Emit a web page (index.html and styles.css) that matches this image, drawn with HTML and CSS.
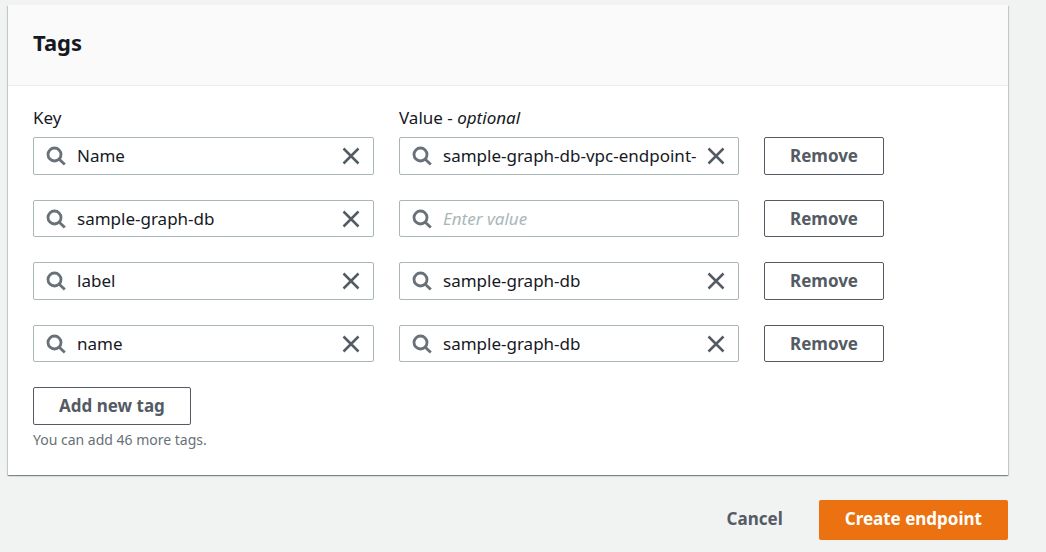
FILE: index.html
```html
<!DOCTYPE html>
<html lang="en">
<head>
<meta charset="utf-8">
<title>Create endpoint</title>
<link rel="stylesheet" href="styles.css">
</head>
<body>
<svg class="sprite" aria-hidden="true">
  <symbol id="search" viewBox="0 0 20 20"><circle cx="8.5" cy="8.5" r="6.5"/><path d="M13 13 18.8 18.6"/></symbol>
  <symbol id="close" viewBox="0 0 18 18"><path d="M1.5 1.5 16.5 16.5M16.5 1.5 1.5 16.5"/></symbol>
</svg>
<form class="page">
  <section class="card">
    <header class="card-header"><h2>Tags</h2></header>
    <div class="card-body">
      <div class="columns labels">
        <label for="key1">Key</label>
        <label for="value1">Value - <em>optional</em></label>
      </div>
      <div class="rows">
        <div class="columns">
          <div class="field"><svg class="search"><use href="#search"/></svg><input type="text" id="key1" value="Name"><button type="button" class="clear" aria-label="Clear key"><svg><use href="#close"/></svg></button></div>
          <div class="field"><svg class="search"><use href="#search"/></svg><input type="text" id="value1" value="sample-graph-db-vpc-endpoint-1"><button type="button" class="clear" aria-label="Clear value"><svg><use href="#close"/></svg></button></div>
          <button type="button" class="button">Remove</button>
        </div>
        <div class="columns">
          <div class="field"><svg class="search"><use href="#search"/></svg><input type="text" aria-label="Key" value="sample-graph-db"><button type="button" class="clear" aria-label="Clear key"><svg><use href="#close"/></svg></button></div>
          <div class="field"><svg class="search"><use href="#search"/></svg><input type="text" aria-label="Value" placeholder="Enter value"></div>
          <button type="button" class="button">Remove</button>
        </div>
        <div class="columns">
          <div class="field"><svg class="search"><use href="#search"/></svg><input type="text" aria-label="Key" value="label"><button type="button" class="clear" aria-label="Clear key"><svg><use href="#close"/></svg></button></div>
          <div class="field"><svg class="search"><use href="#search"/></svg><input type="text" aria-label="Value" value="sample-graph-db"><button type="button" class="clear" aria-label="Clear value"><svg><use href="#close"/></svg></button></div>
          <button type="button" class="button">Remove</button>
        </div>
        <div class="columns">
          <div class="field"><svg class="search"><use href="#search"/></svg><input type="text" aria-label="Key" value="name"><button type="button" class="clear" aria-label="Clear key"><svg><use href="#close"/></svg></button></div>
          <div class="field"><svg class="search"><use href="#search"/></svg><input type="text" aria-label="Value" value="sample-graph-db"><button type="button" class="clear" aria-label="Clear value"><svg><use href="#close"/></svg></button></div>
          <button type="button" class="button">Remove</button>
        </div>
      </div>
      <button type="button" class="button add">Add new tag</button>
      <p class="hint">You can add 46 more tags.</p>
    </div>
  </section>
  <footer class="actions">
    <button type="button" class="cancel">Cancel</button>
    <button type="submit" class="primary">Create endpoint</button>
  </footer>
</form>
</body>
</html>
```

FILE: styles.css
```css
* {
  box-sizing: border-box;
}

body {
  margin: 0;
  background: #f1f3f3;
  color: #16191f;
  font: 17px/24px "Noto Sans", "Open Sans", sans-serif;
}

input,
button {
  font: inherit;
}

button {
  cursor: pointer;
}

.sprite {
  display: none;
}

.page {
  padding: 5px 38px 12px 8px;
}

.card {
  background: #fff;
  box-shadow: 0 1px 1px #001c244d, 1px 1px 1px #001c2426, -1px 1px 1px #001c2426;
}

.card-header {
  padding: 23px 25px 29px;
  background: #fafafa;
  border-bottom: 1px solid #eaeded;
}

h2 {
  margin: 0;
  font-size: 22px;
  line-height: 28px;
}

.card-body {
  padding: 20px 25px 25px;
}

.columns {
  display: grid;
  grid-template-columns: 341fr 340fr 219fr;
  column-gap: 25px;
}

.labels {
  margin-bottom: 7px;
}

.rows {
  display: grid;
  grid-auto-rows: 38px 37px;
  row-gap: 25px;
}

.field {
  display: flex;
  align-items: center;
  min-width: 0;
  padding: 0 13px 0 12px;
  background: #fff;
  border: 1px solid #aab7b8;
  border-radius: 2px;
}

.field svg {
  flex: none;
  display: block;
  fill: none;
}

.field .search {
  width: 20px;
  height: 20px;
  stroke: #687078;
  stroke-width: 2.8;
}

.field input {
  flex: 1;
  min-width: 0;
  margin: 0 9px 0 11px;
  padding: 0;
  border: 0;
  outline: 0;
  background: none;
  color: #16191f;
}

.field input::placeholder {
  color: #aab7b8;
  font-style: italic;
  opacity: 1;
}

.clear {
  padding: 0;
  border: 0;
  background: none;
}

.clear svg {
  width: 18px;
  height: 18px;
  stroke: #545b64;
  stroke-width: 2.5;
}

.button {
  justify-self: start;
  padding: 0 25px;
  background: #fff;
  border: 1px solid #545b64;
  border-radius: 2px;
  color: #545b64;
  font-weight: 700;
}

.add {
  display: block;
  height: 38px;
  margin-top: 25px;
}

.hint {
  margin: 5px 0 0;
  color: #687078;
  font-size: 14px;
  line-height: 20px;
}

.actions {
  display: flex;
  justify-content: flex-end;
  align-items: center;
  gap: 10px;
  padding-top: 25px;
}

.cancel,
.primary {
  height: 40px;
  padding: 0 26px 2px;
  border: 0;
  border-radius: 2px;
  background: none;
  color: #545b64;
  font-weight: 700;
}

.primary {
  background: #ec7211;
  color: #fff;
}
```
